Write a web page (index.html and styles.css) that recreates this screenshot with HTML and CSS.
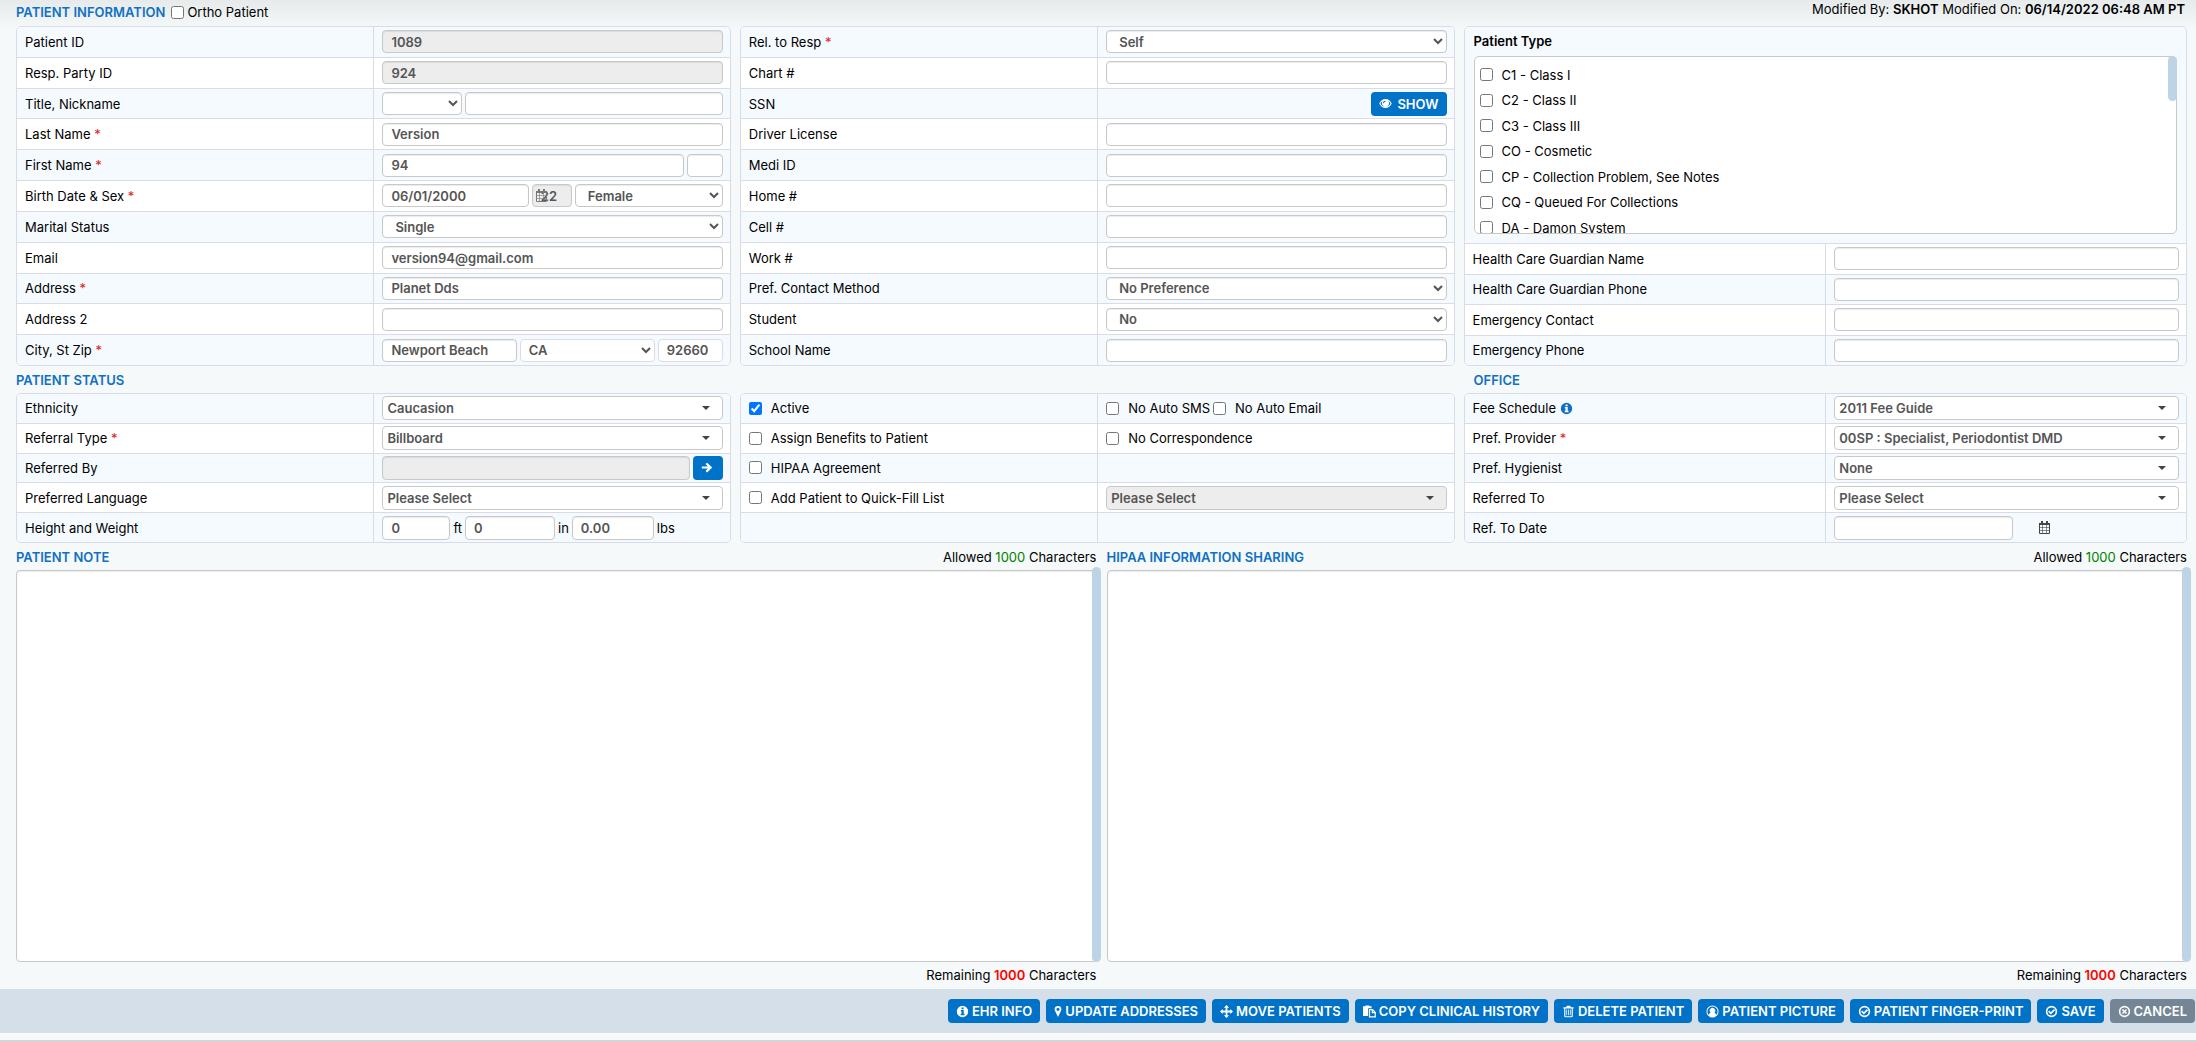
FILE: index.html
```html
<!DOCTYPE html>
<html lang="en">
<head>
  <meta charset="UTF-8" />
  <meta name="viewport" content="width=device-width, initial-scale=1.0"/>
  <title>Patient Information</title>
  <link rel="stylesheet" href="styles.css">
</head>
<body>
  <svg class="sprite" aria-hidden="true">
    <symbol id="i-info" viewBox="0 0 16 16"><path fill-rule="evenodd" d="M8 1a7 7 0 1 0 0 14A7 7 0 0 0 8 1zM6.8 3h2.6v2.2H6.8zM6 6.3h3.5v4.4h1v1.8H5.8v-1.8h1V8.1H6z"/></symbol>
    <symbol id="i-eye" viewBox="0 0 16 16"><path fill-rule="evenodd" d="M8 2.5C4.500 2.500 1.700 4.700.3 8c1.400 3.300 4.200 5.500 7.700 5.500s6.300-2.200 7.700-5.500C14.300 4.700 11.500 2.500 8 2.500zM4.400 5.200a4.300 4.300 0 1 0 7.200 0C13 6 13.700 7 14.200 8c-1.200 2.300-3.400 4.100-6.200 4.100S3 10.300 1.800 8C2.300 7 3 6 4.400 5.200zM8 4.500v1.200A1.900 1.900 0 0 0 6.100 7.600H5A3 3 0 0 1 8 4.500z"/></symbol>
    <symbol id="i-arrow" viewBox="0 0 16 16"><path d="M1 6.700h7.500L5.600 3.800 7.500 2l6.300 6-6.300 6-1.900-1.800 2.900-2.900H1z"/></symbol>
    <symbol id="i-pin" viewBox="0 0 10 16"><path fill-rule="evenodd" d="M5 1a4.200 4.200 0 0 0-4.200 4.200c0 1 .3 1.700.7 2.500L5 15l3.500-7.300c.4-.8.7-1.500.7-2.500A4.200 4.200 0 0 0 5 1zm0 2.300a2 2 0 1 1 0 4 2 2 0 0 1 0-4z"/></symbol>
    <symbol id="i-move" viewBox="0 0 16 16"><path d="M8 0l3.200 3.300H9.100v3.600h3.600V4.800L16 8l-3.300 3.200V9.100H9.100v3.600h2.100L8 16l-3.200-3.300h2.100V9.100H3.300v2.100L0 8l3.300-3.200v2.100h3.600V3.300H4.800z"/></symbol>
    <symbol id="i-copy" viewBox="0 0 16 16"><path d="M0 1.500h3V.5h5v1h2.500V4H6.300v9.500H0z"/><path fill="none" stroke="currentColor" stroke-width="1.500" d="M8 5.800h3.800l3.300 3.300v5.600H8zM11.500 5.800v3.500h3.600"/></symbol>
    <symbol id="i-trash" viewBox="0 0 14 16"><path fill-rule="evenodd" d="M5 1h4l1 1.700h3.300V4.200h-1V13.500c0 1-.6 1.500-1.500 1.500H3.200c-.9 0-1.500-.5-1.500-1.500V4.200h-1V2.700H4zM3.100 4.200v9.500h7.800V4.200zM4.300 5.500h1v7h-1zm2.200 0h1v7h-1zm2.200 0h1v7h-1z"/></symbol>
    <symbol id="i-user" viewBox="0 0 16 16"><path fill-rule="evenodd" d="M8 .5a7.500 7.500 0 1 0 0 15 7.500 7.500 0 0 0 0-15zM3.300 12.300a6.300 6.300 0 1 1 9.400 0c-.4-1.700-1.200-2.700-2.400-2.900a3.400 3.400 0 1 0-4.600 0c-1.200.2-2 1.200-2.400 2.900z"/></symbol>
    <symbol id="i-check" viewBox="0 0 16 16"><circle cx="8" cy="8" r="6" fill="none" stroke="currentColor" stroke-width="2"/><path fill="none" stroke="currentColor" stroke-width="2" d="M4.500 7.500l2.700 2.700 4.500-4.500"/></symbol>
    <symbol id="i-times" viewBox="0 0 16 16"><circle cx="8" cy="8" r="6" fill="none" stroke="currentColor" stroke-width="2"/><path fill="none" stroke="currentColor" stroke-width="2" d="M5.500 5.500l5 5m0-5l-5 5"/></symbol>
    <symbol id="i-calendar" viewBox="0 0 13 13"><path fill="none" stroke="currentColor" d="M1.500 2.500h10v10h-10z"/><path fill="none" stroke="currentColor" stroke-opacity="0.6" d="M1 6.500h11M1 9.500h11M4.500 4v9M8.500 4v9"/><path d="M1 2h11v2H1zM3 0h2v3H3zM8 0h2v3H8z"/></symbol>
  </svg>

  <main>
    <header class="top-bar">
      <h2>PATIENT INFORMATION</h2>
      <label class="ortho"><input type="checkbox" /> Ortho Patient</label>
      <p class="modified">Modified By: <b>SKHOT</b> Modified On: <b>06/14/2022 06:48 AM PT</b></p>
    </header>

    <div class="panels info">
      <section class="panel">
        <div class="row"><label for="patientId">Patient ID</label><div class="field"><input id="patientId" type="text" value="1089" disabled /></div></div>
        <div class="row"><label for="respId">Resp. Party ID</label><div class="field"><input id="respId" type="text" value="924" disabled /></div></div>
        <div class="row"><label for="nickname">Title, Nickname</label><div class="field"><select class="w-title" aria-label="Title"><option></option></select><input id="nickname" type="text" /></div></div>
        <div class="row"><label for="lastName">Last Name <i>*</i></label><div class="field"><input id="lastName" type="text" value="Version" /></div></div>
        <div class="row"><label for="firstName">First Name <i>*</i></label><div class="field"><input id="firstName" type="text" value="94" /><input class="w-initial" type="text" aria-label="Middle initial" /></div></div>
        <div class="row"><label for="birthDate">Birth Date &amp; Sex <i>*</i></label><div class="field"><input id="birthDate" type="text" value="06/01/2000" /><span class="age"><input type="text" value="22" aria-label="Age" disabled /><svg class="icon"><use href="#i-calendar"/></svg></span><select class="w-sex" aria-label="Sex"><option>Female</option></select></div></div>
        <div class="row"><label for="marital">Marital Status</label><div class="field"><select id="marital"><option>Single</option></select></div></div>
        <div class="row"><label for="email">Email</label><div class="field"><input id="email" type="text" value="version94@gmail.com" /></div></div>
        <div class="row"><label for="address">Address <i>*</i></label><div class="field"><input id="address" type="text" value="Planet Dds" /></div></div>
        <div class="row"><label for="address2">Address 2</label><div class="field"><input id="address2" type="text" /></div></div>
        <div class="row"><label for="city">City, St Zip <i>*</i></label><div class="field"><input id="city" type="text" value="Newport Beach" /><select class="w-state light" aria-label="State"><option>CA</option></select><input class="w-zip light" type="text" value="92660" aria-label="Zip" /></div></div>
      </section>

      <section class="panel">
        <div class="row"><label for="relation">Rel. to Resp <i>*</i></label><div class="field"><select id="relation"><option>Self</option></select></div></div>
        <div class="row"><label for="chart">Chart #</label><div class="field"><input id="chart" type="text" /></div></div>
        <div class="row"><span class="name">SSN</span><div class="field end"><button type="button" class="btn show"><svg class="icon"><use href="#i-eye"/></svg>SHOW</button></div></div>
        <div class="row"><label for="license">Driver License</label><div class="field"><input id="license" type="text" /></div></div>
        <div class="row"><label for="medi">Medi ID</label><div class="field"><input id="medi" type="text" /></div></div>
        <div class="row"><label for="home">Home #</label><div class="field"><input id="home" type="text" /></div></div>
        <div class="row"><label for="cell">Cell #</label><div class="field"><input id="cell" type="text" /></div></div>
        <div class="row"><label for="work">Work #</label><div class="field"><input id="work" type="text" /></div></div>
        <div class="row"><label for="contact">Pref. Contact Method</label><div class="field"><select id="contact"><option>No Preference</option></select></div></div>
        <div class="row"><label for="student">Student</label><div class="field"><select id="student"><option>No</option></select></div></div>
        <div class="row"><label for="school">School Name</label><div class="field"><input id="school" type="text" /></div></div>
      </section>

      <section class="panel">
        <div class="types">
          <h3>Patient Type</h3>
          <div class="type-box">
            <ul>
              <li><label><input type="checkbox" />C1 - Class I</label></li>
              <li><label><input type="checkbox" />C2 - Class II</label></li>
              <li><label><input type="checkbox" />C3 - Class III</label></li>
              <li><label><input type="checkbox" />CO - Cosmetic</label></li>
              <li><label><input type="checkbox" />CP - Collection Problem, See Notes</label></li>
              <li><label><input type="checkbox" />CQ - Queued For Collections</label></li>
              <li><label><input type="checkbox" />DA - Damon System</label></li>
            </ul>
            <span class="thumb"></span>
          </div>
        </div>
        <div class="row"><label for="guardName">Health Care Guardian Name</label><div class="field"><input id="guardName" type="text" /></div></div>
        <div class="row"><label for="guardPhone">Health Care Guardian Phone</label><div class="field"><input id="guardPhone" type="text" /></div></div>
        <div class="row"><label for="emContact">Emergency Contact</label><div class="field"><input id="emContact" type="text" /></div></div>
        <div class="row"><label for="emPhone">Emergency Phone</label><div class="field"><input id="emPhone" type="text" /></div></div>
      </section>
    </div>

    <div class="panels titles">
      <h2>PATIENT STATUS</h2>
      <span></span>
      <h2 class="office">OFFICE</h2>
    </div>

    <div class="panels status">
      <section class="panel">
        <div class="row"><label for="ethnicity">Ethnicity</label><div class="field"><span class="combo"><select id="ethnicity"><option>Caucasion</option></select></span></div></div>
        <div class="row"><label for="referral">Referral Type <i>*</i></label><div class="field"><span class="combo"><select id="referral"><option>Billboard</option></select></span></div></div>
        <div class="row"><label for="referredBy">Referred By</label><div class="field"><input id="referredBy" type="text" disabled /><button type="button" class="btn go" aria-label="Open"><svg class="icon"><use href="#i-arrow"/></svg></button></div></div>
        <div class="row"><label for="language">Preferred Language</label><div class="field"><span class="combo"><select id="language"><option>Please Select</option></select></span></div></div>
        <div class="row"><label for="feet">Height and Weight</label><div class="field"><input id="feet" class="w-feet" type="text" value="0" />ft<input class="w-inch" type="text" value="0" aria-label="Inches" />in<input class="w-lbs" type="text" value="0.00" aria-label="Pounds" />lbs</div></div>
      </section>

      <section class="panel checks">
        <div class="row"><label><input type="checkbox" checked />Active</label><div class="field"><label><input type="checkbox" />No Auto SMS</label><label><input type="checkbox" />No Auto Email</label></div></div>
        <div class="row"><label><input type="checkbox" />Assign Benefits to Patient</label><div class="field"><label><input type="checkbox" />No Correspondence</label></div></div>
        <div class="row"><label><input type="checkbox" />HIPAA Agreement</label><div class="field"></div></div>
        <div class="row"><label><input type="checkbox" />Add Patient to Quick-Fill List</label><div class="field"><span class="combo"><select aria-label="Quick-Fill List" disabled><option>Please Select</option></select></span></div></div>
        <div class="row"><span class="name"></span><div class="field"></div></div>
      </section>

      <section class="panel">
        <div class="row"><label for="fee">Fee Schedule <svg class="icon info-mark"><use href="#i-info"/></svg></label><div class="field"><span class="combo"><select id="fee"><option>2011 Fee Guide</option></select></span></div></div>
        <div class="row"><label for="provider">Pref. Provider <i>*</i></label><div class="field"><span class="combo"><select id="provider"><option>00SP : Specialist, Periodontist DMD</option></select></span></div></div>
        <div class="row"><label for="hygienist">Pref. Hygienist</label><div class="field"><span class="combo"><select id="hygienist"><option>None</option></select></span></div></div>
        <div class="row"><label for="referredTo">Referred To</label><div class="field"><span class="combo"><select id="referredTo"><option>Please Select</option></select></span></div></div>
        <div class="row"><label for="refDate">Ref. To Date</label><div class="field"><input id="refDate" class="w-date" type="text" /><svg class="icon date-icon"><use href="#i-calendar"/></svg></div></div>
      </section>
    </div>

    <div class="notes">
      <section class="note">
        <div class="note-head"><h2><label for="note">PATIENT NOTE</label></h2><p>Allowed <span class="ok">1000</span> Characters</p></div>
        <div class="note-body"><textarea id="note"></textarea><span class="thumb"></span></div>
        <p class="remaining">Remaining <b>1000</b> Characters</p>
      </section>
      <section class="note">
        <div class="note-head"><h2><label for="hipaa">HIPAA INFORMATION SHARING</label></h2><p>Allowed <span class="ok">1000</span> Characters</p></div>
        <div class="note-body"><textarea id="hipaa"></textarea><span class="thumb"></span></div>
        <p class="remaining">Remaining <b>1000</b> Characters</p>
      </section>
    </div>
  </main>

  <footer>
    <button type="button" class="btn"><svg class="icon"><use href="#i-info"/></svg>EHR INFO</button>
    <button type="button" class="btn"><svg class="icon narrow"><use href="#i-pin"/></svg>UPDATE ADDRESSES</button>
    <button type="button" class="btn"><svg class="icon"><use href="#i-move"/></svg>MOVE PATIENTS</button>
    <button type="button" class="btn"><svg class="icon"><use href="#i-copy"/></svg>COPY CLINICAL HISTORY</button>
    <button type="button" class="btn"><svg class="icon"><use href="#i-trash"/></svg>DELETE PATIENT</button>
    <button type="button" class="btn"><svg class="icon"><use href="#i-user"/></svg>PATIENT PICTURE</button>
    <button type="button" class="btn"><svg class="icon"><use href="#i-check"/></svg>PATIENT FINGER-PRINT</button>
    <button type="button" class="btn"><svg class="icon"><use href="#i-check"/></svg>SAVE</button>
    <button type="button" class="btn cancel"><svg class="icon"><use href="#i-times"/></svg>CANCEL</button>
  </footer>
</body>
</html>
```

FILE: styles.css
```css
* {
  box-sizing: border-box;
}

body {
  display: flex;
  flex-direction: column;
  min-height: 100vh;
  margin: 0;
  padding-bottom: 7px;
  border-bottom: 2px solid #d3d6d6;
  background: linear-gradient(#e6eaea, #f5f9fa 30px) no-repeat #f5f9fa;
  color: #000;
  font-family: Inter, "Liberation Sans", sans-serif;
  font-size: 13px;
  line-height: 18px;
}

h2, h3, p, ul {
  margin: 0;
  padding: 0;
}

h2 {
  color: #1070c4;
  font-size: 13px;
  font-weight: 600;
}

b {
  font-weight: 600;
}

input, select, textarea, button {
  font: inherit;
}

.sprite {
  position: absolute;
  width: 0;
  height: 0;
}

.icon {
  flex: none;
  width: 13px;
  height: 13px;
  fill: currentColor;
}

main {
  display: flex;
  flex: 1;
  flex-direction: column;
  padding: 0 9px 0 16px;
}

.top-bar {
  display: flex;
  gap: 6px;
  height: 26px;
  padding-top: 3px;
}

.ortho {
  display: flex;
  align-items: center;
  gap: 3px;
  height: 18px;
}

.modified {
  margin-top: -3px;
  margin-left: auto;
  padding-right: 2px;
}

/* Panels */
.panels {
  display: grid;
  grid-template-columns: 83fr 83fr 84fr;
  gap: 9px;
}

.titles {
  align-items: center;
  height: 27px;
}

.office {
  padding-left: 10px;
}

.panel {
  display: flex;
  flex-direction: column;
  overflow: hidden;
  border: 1px solid #d9dce8;
  border-radius: 5px;
  background-color: #fff;
}

.info .panel {
  min-height: 340px;
}

.status .panel {
  min-height: 150px;
}

.row {
  display: grid;
  flex: 1;
  grid-template-columns: 1fr 1fr;
  border-bottom: 1px solid #d9dce8;
}

.row:last-child {
  border-bottom: none;
}

.row:nth-child(odd), .types {
  background-color: #f5faff;
}

.row > label, .name {
  align-self: center;
  padding-left: 8px;
}

.row i {
  color: #e02020;
  font-style: normal;
}

.field {
  display: flex;
  align-items: center;
  gap: 3px;
  min-width: 0;
  padding: 0 7px 0 8px;
  border-left: 1px solid #d9dce8;
}

.end {
  justify-content: flex-end;
}

/* Controls */
input[type="text"], select, textarea {
  flex: 1;
  min-width: 0;
  width: 100%;
  height: 23px;
  padding: 0 8px;
  border: 1px solid #c8c8c8;
  border-radius: 4px;
  background-color: #fff;
  box-shadow: inset 0 1px 1px rgba(0,0,0,0.08);
  color: #555;
  font-weight: 600;
}

.status input[type="text"], .status select {
  height: 24px;
}

.field input[type="text"]:disabled, .field select:disabled {
  background-color: #ededed;
  opacity: 1;
}

.field .light {
  border-color: #d9dce8;
  box-shadow: none;
}

.field .w-state {
  padding-left: 4px;
}

.field .w-title { flex: 0 0 80px; }
.field .w-initial { flex: 0 0 36px; }
.field .w-sex { flex: 0 0 148px; }
.field .w-state { flex: 0 0 135px; }
.field .w-zip { flex: 0 0 65px; }
.field .w-feet { flex: 0 0 68px; }
.field .w-inch { flex: 0 0 90px; }
.field .w-lbs { flex: 0 0 82px; }
.field .w-date { flex: 0 0 179px; }

.age {
  position: relative;
  display: flex;
  flex: 0 0 40px;
}

.age .icon {
  position: absolute;
  top: 5px;
  left: 3px;
  color: #777;
}

.combo {
  position: relative;
  display: flex;
  flex: 1;
}

.combo select {
  appearance: none;
  padding-left: 4px;
  box-shadow: none;
}

.combo::after {
  content: "";
  position: absolute;
  top: 10px;
  right: 13px;
  border: 4px solid transparent;
  border-top-color: #444;
  border-bottom: none;
}

.date-icon {
  margin-left: 22px;
  color: #444;
}

.info-mark {
  color: #1070c4;
  vertical-align: -2px;
}

input[type="checkbox"] {
  flex: none;
  width: 13px;
  height: 13px;
  margin: 0;
}

.checks label, .types label {
  display: flex;
  align-items: center;
  gap: 9px;
}

/* Patient type list */
.types {
  height: 217px;
  padding: 5px 9px 9px;
  border-bottom: 1px solid #d9dce8;
}

.types h3 {
  height: 24px;
  font-size: 13px;
  font-weight: 600;
}

.types + .row {
  background-color: #fff;
}

.type-box {
  position: relative;
  height: 178px;
}

.type-box ul {
  height: 100%;
  overflow: hidden;
  padding: 5px;
  border: 1px solid #c8c8c8;
  border-radius: 5px;
  background-color: #fff;
  list-style: none;
}

.type-box label {
  height: 25px;
}

.type-box li:nth-child(even) label {
  height: 26px;
}

.thumb {
  position: absolute;
  top: 0;
  right: 0;
  width: 9px;
  height: 45px;
  border-radius: 5px;
  background-color: #bcd4e6;
}

/* Notes */
.notes {
  display: grid;
  flex: 1;
  grid-template-columns: 1fr 1fr;
  gap: 10px;
}

.note {
  display: flex;
  flex-direction: column;
}

.note-head {
  display: flex;
  align-items: center;
  justify-content: space-between;
  height: 27px;
}

.note-body {
  position: relative;
  display: flex;
  flex: 1;
}

.note textarea {
  height: auto;
  resize: none;
}

.note .thumb {
  top: -3px;
  right: -4px;
  bottom: 0;
  height: auto;
}

.ok {
  color: #008000;
}

.remaining {
  padding: 4px 0 5px;
  text-align: right;
}

.remaining b {
  color: #f00;
}

/* Buttons */
.btn {
  display: flex;
  align-items: center;
  justify-content: center;
  gap: 3px;
  height: 24px;
  padding: 0 8px;
  border: none;
  border-radius: 4px;
  background-color: #0072c8;
  color: #fff;
  font-weight: 600;
  cursor: pointer;
}

.btn:hover {
  background-color: #005fa8;
}

.show {
  gap: 5px;
}

.go {
  width: 30px;
}

.narrow {
  width: 8px;
}

.cancel {
  background-color: #748696;
}

footer {
  display: flex;
  align-items: center;
  justify-content: flex-end;
  gap: 6px;
  height: 44px;
  padding-right: 1px;
  background-color: #d5dfe9;
}
```
